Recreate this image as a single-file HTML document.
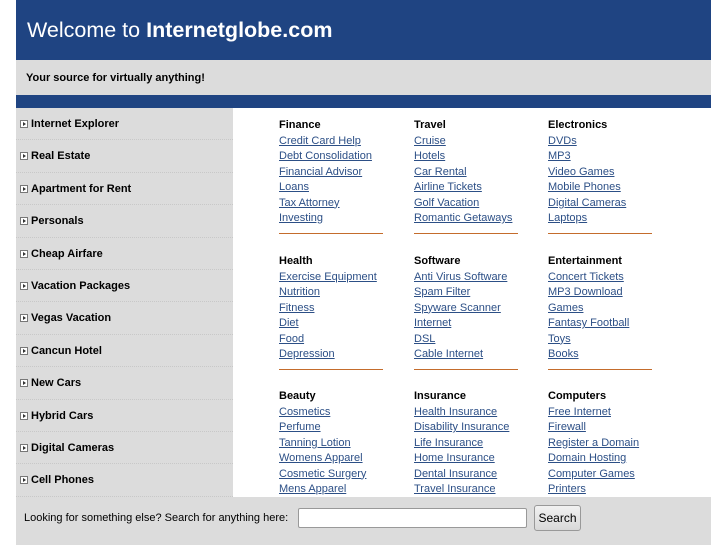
<!DOCTYPE html>
<html><head><meta charset="utf-8"><style>
*{margin:0;padding:0;box-sizing:border-box}
body{width:727px;height:545px;background:#fff;font-family:"Liberation Sans",sans-serif;position:relative;overflow:hidden}
.hdr{position:absolute;left:16px;top:0;width:695px;height:60px;background:#1f4482;color:#fff;font-size:21.5px;padding:18px 0 0 11px}
.hdr b{font-weight:bold}
.sub{position:absolute;left:16px;top:60px;width:695px;height:35px;background:#dcdcdc;font-size:11px;font-weight:bold;color:#000;padding:12px 0 0 10px}
.strip{position:absolute;left:16px;top:95px;width:695px;height:13px;background:#1f4482}
.side{position:absolute;left:16px;top:108px;width:217px;height:389px;background:#dcdcdc}
.side div{height:32.4px;border-bottom:1px dotted #c8c8c8;font-size:11px;font-weight:bold;padding:10px 0 0 4px;color:#000;display:flex;align-items:flex-start}
.bx{display:inline-block;width:8px;height:8px;border:1px solid #777;background:#fff;margin:2px 3px 0 0;position:relative}
.bx:after{content:"";position:absolute;left:2px;top:1px;border-left:3px solid #333;border-top:2px solid transparent;border-bottom:2px solid transparent}
.sec{position:absolute;font-size:11px;line-height:15.5px}
.sec h4{font-size:11px;font-weight:bold;color:#000;line-height:15.5px;margin-top:-4px}
.sec a{display:block;color:#2c4f86;text-decoration:underline;width:max-content}
.sec .ln{width:104px;height:1px;background:#c46c2c;margin-top:6px}
.foot{position:absolute;left:16px;top:497px;width:695px;height:48px;background:#dcdcdc;font-size:11px;color:#000}
.foot span{position:absolute;left:8px;top:15px}
.inp{position:absolute;left:282px;top:11px;width:229px;height:20px;border:1px solid #999;background:#fff;border-radius:2px}
.btn{position:absolute;left:518px;top:8px;width:47px;height:26px;border:1px solid #999;border-radius:3px;background:linear-gradient(#f2f2f2,#d8d8d8);font-size:12px;text-align:center;line-height:24px}
</style></head><body>
<div class="hdr">Welcome to <b>Internetglobe.com</b></div>
<div class="sub">Your source for virtually anything!</div>
<div class="strip"></div>
<div class="side">
<div><span class="bx"></span>Internet Explorer</div>
<div><span class="bx"></span>Real Estate</div>
<div><span class="bx"></span>Apartment for Rent</div>
<div><span class="bx"></span>Personals</div>
<div><span class="bx"></span>Cheap Airfare</div>
<div><span class="bx"></span>Vacation Packages</div>
<div><span class="bx"></span>Vegas Vacation</div>
<div><span class="bx"></span>Cancun Hotel</div>
<div><span class="bx"></span>New Cars</div>
<div><span class="bx"></span>Hybrid Cars</div>
<div><span class="bx"></span>Digital Cameras</div>
<div><span class="bx"></span>Cell Phones</div>
</div>
<div class="sec" style="left:279px;top:122px"><h4>Finance</h4><a>Credit Card Help</a><a>Debt Consolidation</a><a>Financial Advisor</a><a>Loans</a><a>Tax Attorney</a><a>Investing</a><div class="ln"></div></div>
<div class="sec" style="left:414px;top:122px"><h4>Travel</h4><a>Cruise</a><a>Hotels</a><a>Car Rental</a><a>Airline Tickets</a><a>Golf Vacation</a><a>Romantic Getaways</a><div class="ln"></div></div>
<div class="sec" style="left:548px;top:122px"><h4>Electronics</h4><a>DVDs</a><a>MP3</a><a>Video Games</a><a>Mobile Phones</a><a>Digital Cameras</a><a>Laptops</a><div class="ln"></div></div>
<div class="sec" style="left:279px;top:258px"><h4>Health</h4><a>Exercise Equipment</a><a>Nutrition</a><a>Fitness</a><a>Diet</a><a>Food</a><a>Depression</a><div class="ln"></div></div>
<div class="sec" style="left:414px;top:258px"><h4>Software</h4><a>Anti Virus Software</a><a>Spam Filter</a><a>Spyware Scanner</a><a>Internet</a><a>DSL</a><a>Cable Internet</a><div class="ln"></div></div>
<div class="sec" style="left:548px;top:258px"><h4>Entertainment</h4><a>Concert Tickets</a><a>MP3 Download</a><a>Games</a><a>Fantasy Football</a><a>Toys</a><a>Books</a><div class="ln"></div></div>
<div class="sec" style="left:279px;top:393px"><h4>Beauty</h4><a>Cosmetics</a><a>Perfume</a><a>Tanning Lotion</a><a>Womens Apparel</a><a>Cosmetic Surgery</a><a>Mens Apparel</a></div>
<div class="sec" style="left:414px;top:393px"><h4>Insurance</h4><a>Health Insurance</a><a>Disability Insurance</a><a>Life Insurance</a><a>Home Insurance</a><a>Dental Insurance</a><a>Travel Insurance</a></div>
<div class="sec" style="left:548px;top:393px"><h4>Computers</h4><a>Free Internet</a><a>Firewall</a><a>Register a Domain</a><a>Domain Hosting</a><a>Computer Games</a><a>Printers</a></div>
<div class="foot"><span>Looking for something else? Search for anything here:</span><div class="inp"></div><div class="btn">Search</div></div>
</body></html>
